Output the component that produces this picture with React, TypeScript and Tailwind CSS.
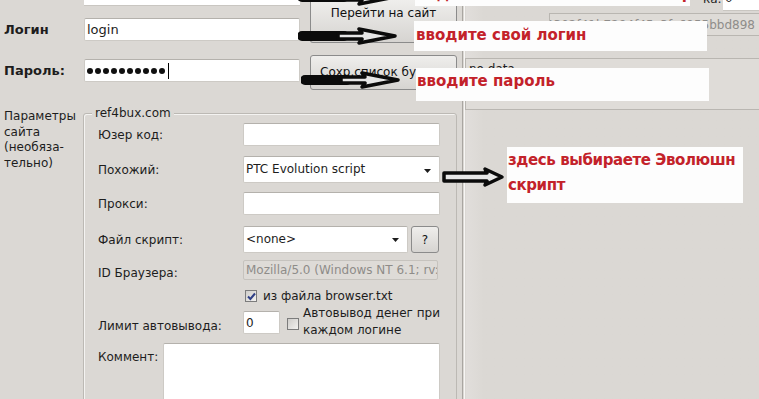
import React from 'react';

const Checkbox = ({ checked }: { checked?: boolean }) => (
  <div className="w-[12px] h-[12px] shrink-0 border border-[#7c7c7c] bg-gradient-to-br from-[#cfcdca] to-[#f3f2f0] flex items-center justify-center">
    {checked && (
      <svg width="9" height="9" viewBox="0 0 9 9">
        <path d="M1 4.5 L3.4 7 L8 1.5" fill="none" stroke="#2f3f86" strokeWidth="2" />
      </svg>
    )}
  </div>
);

const DropArrow = () => (
  <svg width="7" height="4" viewBox="0 0 7 4" className="shrink-0">
    <path d="M0 0 H7 L3.5 4 Z" fill="#1c1c1c" />
  </svg>
);

// hand-drawn looking arrow of the annotations
const Arrow = ({ className }: { className: string }) => (
  <svg width="100" height="18" viewBox="0 0 100 18" className={className}>
    <path d="M4 9 L46 9" stroke="#0b0b0b" strokeWidth="10" strokeLinecap="round" />
    <path
      d="M40 6 L64 6 L61 2 L97 9 L61 16 L64 12 L40 12 Z"
      fill="#e6e6e6"
      stroke="#0b0b0b"
      strokeWidth="3.5"
      strokeLinejoin="round"
    />
  </svg>
);

const Note = ({ className, children }: { className: string; children: React.ReactNode }) => (
  <div
    className={`absolute bg-[#fdfdfd] text-[#c3222a] font-['DejaVu_Sans',sans-serif] font-bold text-[15px] whitespace-nowrap overflow-hidden ${className}`}
  >
    {children}
  </div>
);

export default function App() {
  const input = 'bg-white border border-[#cdcac5] border-t-[#b4b1ac] rounded-[2px]';
  const button =
    'border border-[#8b8b8b] rounded-[3px] bg-gradient-to-b from-[#efeeec] to-[#d6d4d1] text-[#111]';

  return (
    <div className="relative w-[759px] h-[399px] overflow-hidden bg-[#dbd8d4] flex font-['DejaVu_Sans',sans-serif] text-[12px] text-[#1d1d1d]">
      {/* left pane */}
      <div className="w-[457px] shrink-0 flex flex-col">
        <div className="flex h-[95px] shrink-0">
          <div className="w-[300px] flex flex-col">
            <div className="ml-[84px] h-[6px] bg-white border-b border-[#c9c6c1]" />
            <div className="mt-[12px] h-[23px] flex items-center">
              <div className="w-[84px] pl-[4px] font-bold text-[13px]">Логин</div>
              <div className={`${input} flex-1 h-full px-[2px] flex items-center text-[13px]`}>login</div>
            </div>
            <div className="mt-[18px] h-[23px] flex items-center">
              <div className="w-[84px] pl-[4px] font-bold text-[13px]">Пароль:</div>
              <div className={`${input} flex-1 h-full pl-[2px] flex items-center gap-[2px]`}>
                {Array.from({ length: 10 }).map((_, i) => (
                  <div key={i} className="w-[6px] h-[6px] rounded-full bg-[#111]" />
                ))}
                <div className="w-[1px] h-[16px] bg-black ml-[1px]" />
              </div>
            </div>
          </div>
          <div className="ml-[10px] w-[147px] flex flex-col">
            <div className={`${button} h-[43px] border-t-0 rounded-t-none text-center pt-[4px] whitespace-nowrap`}>
              Перейти на сайт
            </div>
            <div className={`${button} mt-[12px] h-[35px] pl-[9px] pt-[7px] overflow-hidden whitespace-nowrap`}>
              Сохр.список буксов
            </div>
          </div>
        </div>

        <div className="flex mt-[12px] shrink-0">
          <div className="w-[83px] shrink-0 pl-[4px] pt-[2px] leading-[15.5px]">
            Параметры
            <br />
            сайта
            <br />
            (необяза-
            <br />
            тельно)
          </div>
          <fieldset className="w-[374px] h-[310px] border border-[#bcb9b4] rounded-[3px] pl-[14px] pr-[16px] shadow-[inset_1px_1px_0_#f4f3f1]">
            <legend className="-ml-[6px] px-[3px] leading-[12px] bg-[#dbd8d4]">ref4bux.com</legend>

            <div className="mt-[4px] h-[23px] flex items-center">
              <div className="w-[145px] shrink-0">Юзер код:</div>
              <div className={`${input} w-[197px] h-full`} />
            </div>
            <div className="mt-[10px] h-[27px] flex items-center">
              <div className="w-[145px] shrink-0">Похожий:</div>
              <div className={`${input} w-[197px] h-full pl-[2px] pr-[8px] pt-[3px] flex items-start justify-between`}>
                <span>PTC Evolution script</span>
                <span className="pt-[9px]">
                  <DropArrow />
                </span>
              </div>
            </div>
            <div className="mt-[9px] h-[23px] flex items-center">
              <div className="w-[145px] shrink-0">Прокси:</div>
              <div className={`${input} w-[197px] h-full`} />
            </div>
            <div className="mt-[11px] h-[27px] flex items-center">
              <div className="w-[145px] shrink-0">Файл скрипт:</div>
              <div className={`${input} w-[165px] h-full pl-[2px] pr-[8px] pt-[3px] flex items-start justify-between`}>
                <span>&lt;none&gt;</span>
                <span className="pt-[8px]">
                  <DropArrow />
                </span>
              </div>
              <div className={`${button} ml-[3px] w-[28px] h-full flex items-center justify-center`}>?</div>
            </div>
            <div className="mt-[7px] h-[20px] flex items-start">
              <div className="w-[145px] shrink-0 pt-[6px] leading-[14px]">ID Браузера:</div>
              <div className="w-[195px] h-full border border-[#c6c3be] bg-[#dedbd7] rounded-[2px] pl-[2px] text-[#8e8c89] overflow-hidden whitespace-nowrap flex items-center">
                Mozilla/5.0 (Windows NT 6.1; rv:34.0)
              </div>
            </div>
            <div className="mt-[10px] h-[12px] flex items-center">
              <div className="w-[147px] shrink-0" />
              <Checkbox checked />
              <span className="ml-[6px]">из файла browser.txt</span>
            </div>
            <div className="mt-[9px] h-[23px] flex items-start">
              <div className="w-[145px] shrink-0 pt-[8px] leading-[14px]">Лимит автовывода:</div>
              <div className={`${input} w-[37px] h-full px-[2px] flex items-center`}>0</div>
              <div className="ml-[7px] mt-[7px]">
                <Checkbox />
              </div>
              <div className="ml-[4px] -mt-[6px] leading-[17px]">
                Автовывод денег при
                <br />
                каждом логине
              </div>
            </div>
            <div className="mt-[9px] flex items-start">
              <div className="w-[65px] shrink-0 pt-[7px] leading-[14px]">Коммент:</div>
              <div className={`${input} w-[277px] h-[80px]`} />
            </div>
          </fieldset>
        </div>
      </div>

      {/* splitter */}
      <div className="w-[9px] shrink-0 flex">
        <div className="w-[1px] ml-[5px] bg-[#a9a6a1]" />
        <div className="w-[1px] ml-[1px] bg-[#f7f6f4]" />
      </div>

      {/* right pane */}
      <div className="w-[293px] shrink-0 flex flex-col bg-gradient-to-r from-[#e1dedb] to-[#dbd8d4] to-[6%]">
        <div className="h-[12px] shrink-0 flex items-start overflow-hidden pl-[237px]">
          <span className="w-[20px] shrink-0 -mt-[8px] leading-[14px]">ка:</span>
          <div className="w-[36px] shrink-0 h-[11px] bg-white border-b border-[#c9c6c1] overflow-hidden pl-[2px]">
            <span className="block -mt-[9px] leading-[14px]">0</span>
          </div>
        </div>
        <div className="ml-[83px] mt-[1px] h-[23px] shrink-0 border border-[#b9b6b1] border-r-0 bg-[#dedbd7] pr-[4px] text-[#8f8d8a] whitespace-nowrap overflow-hidden flex items-center justify-end">
          8c19302f41b7294f45c3fc6955bbd898
        </div>
        <div className="mt-[22px] -ml-[1px] h-[52px] shrink-0 border border-[#b9b6b1] border-r-0 bg-[#dfdcd8] pl-[3px] pt-[3px] leading-[14px]">
          no data
        </div>
      </div>

      {/* annotations laid over the screenshot */}
      <Note className="left-[415px] -top-[22px] w-[275px] h-[28px] pl-[2px] pt-[6px] leading-[20px]">
        водите название сайта без http
      </Note>
      <Note className="left-[414px] top-[21px] w-[293px] h-[30px] pl-[2px] pt-[4px] leading-[20px]">
        вводите свой логин
      </Note>
      <Note className="left-[416px] top-[68px] w-[293px] h-[33px] pl-[1px] pt-[3px] leading-[20px]">
        вводите пароль
      </Note>
      <Note className="left-[507px] top-[147px] w-[236px] h-[56px] pl-[1px] pt-[1px] leading-[25px] tracking-[-0.4px]">
        здесь выбираете Эволюшн
        <br />
        скрипт
      </Note>

      <Arrow className="absolute left-[298px] -top-[12px]" />
      <Arrow className="absolute left-[298px] top-[27px]" />
      <Arrow className="absolute left-[301px] top-[71px]" />
      <svg width="64" height="22" viewBox="0 0 64 22" className="absolute left-[441px] top-[166px]">
        <path
          d="M3 7 L46 7 L44 3 L61 11 L44 19 L46 15 L3 15 Z"
          fill="#e8e8e8"
          stroke="#0b0b0b"
          strokeWidth="3.5"
          strokeLinejoin="round"
        />
      </svg>
    </div>
  );
}
